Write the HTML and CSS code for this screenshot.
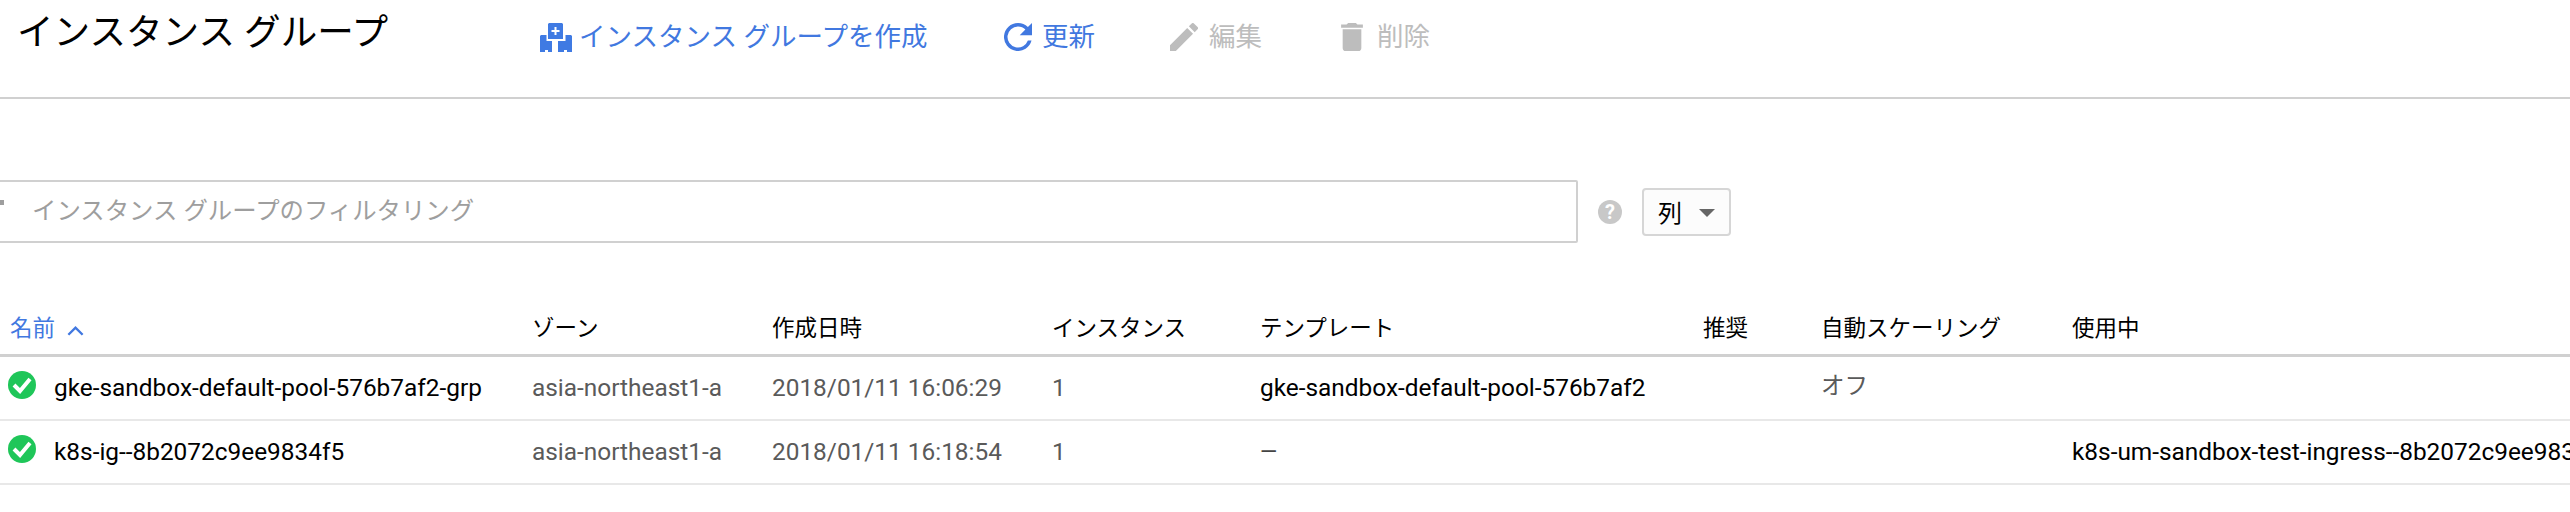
FILE: index.html
```html
<!DOCTYPE html>
<html lang="ja">

<head>
    <meta charset="UTF-8">
    <title>インスタンス グループ</title>
    <link rel="stylesheet" href="styles.css">
</head>

<body>
    <header class="page-header">
        <h1 class="page-title">インスタンス グループ</h1>
        <nav class="actions">
            <a class="action action-create">
                <svg class="icon-create" viewBox="0 0 32 30">
                    <path fill="currentColor" d="M9 1h13l1 1v15H8V2z" />
                    <path fill="#fff" d="M14.5 5h2v3h3v2h-3v3h-2v-3h-3V8h3z" />
                    <path fill="currentColor" d="M1 13h5.5v6H12v11H8v-2H5v2H0V14zM18 19h7.5v-6H31l1 1v16h-5v-2h-3v2h-6z" />
                </svg>
                <span>インスタンス グループを作成</span>
            </a>
            <a class="action action-refresh">
                <svg class="icon" viewBox="4 4 16 16">
                    <path fill="currentColor" d="M17.65 6.35A7.95 7.95 0 0 0 12 4a8 8 0 1 0 7.73 10h-2.08A6 6 0 1 1 12 6c1.66 0 3.14.69 4.22 1.78L13 11h7V4l-2.35 2.35z" />
                </svg>
                <span>更新</span>
            </a>
            <a class="action action-edit disabled">
                <svg class="icon" viewBox="3 3 18 18">
                    <path fill="currentColor" d="M3 17.25V21h3.75L17.81 9.94l-3.75-3.75L3 17.25zM20.71 7.04a1 1 0 0 0 0-1.41l-2.34-2.34a1 1 0 0 0-1.41 0l-1.83 1.83 3.75 3.75 1.83-1.83z" />
                </svg>
                <span>編集</span>
            </a>
            <a class="action action-delete disabled">
                <svg class="icon-delete" viewBox="5 3 14 18">
                    <path fill="currentColor" d="M6 19a2 2 0 0 0 2 2h8a2 2 0 0 0 2-2V7H6v12zM19 4h-3.5l-1-1h-5l-1 1H5v2h14V4z" />
                </svg>
                <span>削除</span>
            </a>
        </nav>
    </header>

    <section class="filter-row">
        <div class="filter-box">
            <i class="filter-icon"></i>
            <span class="filter-text">インスタンス グループのフィルタリング</span>
        </div>
        <span class="help-icon">?</span>
        <button class="columns-button">列<i class="caret"></i></button>
    </section>

    <table class="groups">
        <colgroup>
            <col class="col-status">
            <col class="col-name">
            <col class="col-zone">
            <col class="col-date">
            <col class="col-count">
            <col class="col-template">
            <col class="col-rec">
            <col class="col-scale">
            <col class="col-use">
        </colgroup>
        <thead>
            <tr>
                <th class="sorted" colspan="2">名前
                    <svg class="sort-arrow" viewBox="0 0 16 10">
                        <path fill="none" stroke="currentColor" stroke-width="2" d="M2 9l6-6 6 6" />
                    </svg>
                </th>
                <th>ゾーン</th>
                <th>作成日時</th>
                <th>インスタンス</th>
                <th>テンプレート</th>
                <th>推奨</th>
                <th>自動スケーリング</th>
                <th>使用中</th>
            </tr>
        </thead>
        <tbody>
            <tr>
                <td class="status">
                    <svg class="check" viewBox="0 0 28 28">
                        <circle cx="14" cy="14" r="14" fill="#1fc659" />
                        <path fill="none" stroke="#fff" stroke-width="4" d="M6 14l6 6L22 8" />
                    </svg>
                </td>
                <td class="link">gke-sandbox-default-pool-576b7af2-grp</td>
                <td>asia-northeast1-a</td>
                <td>2018/01/11 16:06:29</td>
                <td>1</td>
                <td class="link">gke-sandbox-default-pool-576b7af2</td>
                <td></td>
                <td class="kana">オフ</td>
                <td></td>
            </tr>
            <tr>
                <td class="status">
                    <svg class="check" viewBox="0 0 28 28">
                        <circle cx="14" cy="14" r="14" fill="#1fc659" />
                        <path fill="none" stroke="#fff" stroke-width="4" d="M6 14l6 6L22 8" />
                    </svg>
                </td>
                <td class="link">k8s-ig--8b2072c9ee9834f5</td>
                <td>asia-northeast1-a</td>
                <td>2018/01/11 16:18:54</td>
                <td>1</td>
                <td class="dash">—</td>
                <td></td>
                <td></td>
                <td class="link">k8s-um-sandbox-test-ingress--8b2072c9ee9834f5</td>
            </tr>
        </tbody>
    </table>
</body>

</html>
```

FILE: styles.css
```css
* {
    box-sizing: border-box;
}

body {
    width: 2570px;
    height: 512px;
    margin: 0;
    overflow: hidden;
    background-color: #fff;
    color: #000;
    font-family: Roboto, "Noto Sans CJK JP", sans-serif;
}

.page-header {
    display: flex;
    height: 99px;
    padding: 10px 0 0 17px;
    border-bottom: 2px solid #d0d0d0;
}

.page-title {
    width: 523px;
    margin: 0;
    font-size: 36.6px;
    font-weight: 400;
    line-height: 46px;
}

.actions {
    display: flex;
    align-items: center;
    height: 53px;
}

.action {
    display: flex;
    align-items: center;
    color: #4178e0;
    font-size: 26.5px;
}

.action span {
    margin-bottom: 5px;
}

.action.disabled {
    color: #bdbdbd;
}

.action-create {
    width: 464px;
    gap: 7px;
}

.action-refresh {
    width: 166px;
    gap: 10px;
}

.action-edit {
    width: 170px;
    gap: 11px;
}

.action-delete {
    gap: 13px;
}

.icon-create {
    width: 32px;
    height: 30px;
    color: #3f7ae3;
}

.icon {
    width: 28px;
    height: 28px;
}

.icon-delete {
    width: 24px;
    height: 28px;
}

.filter-row {
    display: flex;
    align-items: center;
    margin: 81px 0 0 -10px;
}

.filter-box {
    display: flex;
    align-items: center;
    width: 1588px;
    height: 63px;
    padding-bottom: 6px;
    border: 2px solid #d0d0d0;
    border-radius: 2px;
    color: #9e9e9e;
    font-size: 24.4px;
}

.filter-icon {
    width: 12px;
    height: 5px;
    margin: -12px 28px 0 0;
    background-color: #9e9e9e;
}

.help-icon {
    width: 24px;
    height: 24px;
    margin-left: 20px;
    border-radius: 50%;
    background-color: #c8c8c8;
    color: #fff;
    font-size: 20px;
    font-weight: 700;
    line-height: 24px;
    text-align: center;
}

.columns-button {
    display: flex;
    align-items: center;
    width: 89px;
    height: 48px;
    margin-left: 20px;
    padding: 0 0 0 14px;
    border: 2px solid #d6d6d6;
    border-radius: 4px;
    background-color: #fcfcfc;
    color: #000;
    font-family: inherit;
    font-size: 24px;
}

.caret {
    width: 0;
    height: 0;
    margin: 2px 0 0 17px;
    border-top: 8px solid #666;
    border-left: 8px solid transparent;
    border-right: 8px solid transparent;
}

.groups {
    width: 2570px;
    margin-top: 50px;
    border-collapse: separate;
    border-spacing: 0;
    table-layout: fixed;
    font-size: 24.4px;
    white-space: nowrap;
}

.col-status { width: 54px; }
.col-name { width: 478px; }
.col-zone { width: 240px; }
.col-date { width: 280px; }
.col-count { width: 208px; }
.col-template { width: 443px; }
.col-rec { width: 118px; }
.col-scale { width: 251px; }
.col-use { width: 498px; }

.groups th {
    height: 64px;
    padding: 4px 0 0;
    border-bottom: 3px solid #d0d0d0;
    font-size: 22.5px;
    font-weight: 400;
    text-align: left;
}

.groups th.sorted {
    padding-left: 10px;
    color: #4178e0;
}

.sort-arrow {
    width: 19px;
    height: 12px;
    margin-left: 5px;
}

.groups td {
    height: 64px;
    padding: 0 0 2px;
    border-bottom: 2px solid #e8e8e8;
    color: #5a5a5a;
    overflow: visible;
}

.groups td.link {
    color: #000;
}

.groups td.kana {
    padding-bottom: 8px;
    font-size: 23.5px;
}

.groups td.dash {
    font-size: 22px;
    color: #444;
}

.groups td.status {
    padding: 0 0 0 8px;
}

.check {
    display: block;
    width: 28px;
    height: 28px;
    margin-top: -6px;
}
```
